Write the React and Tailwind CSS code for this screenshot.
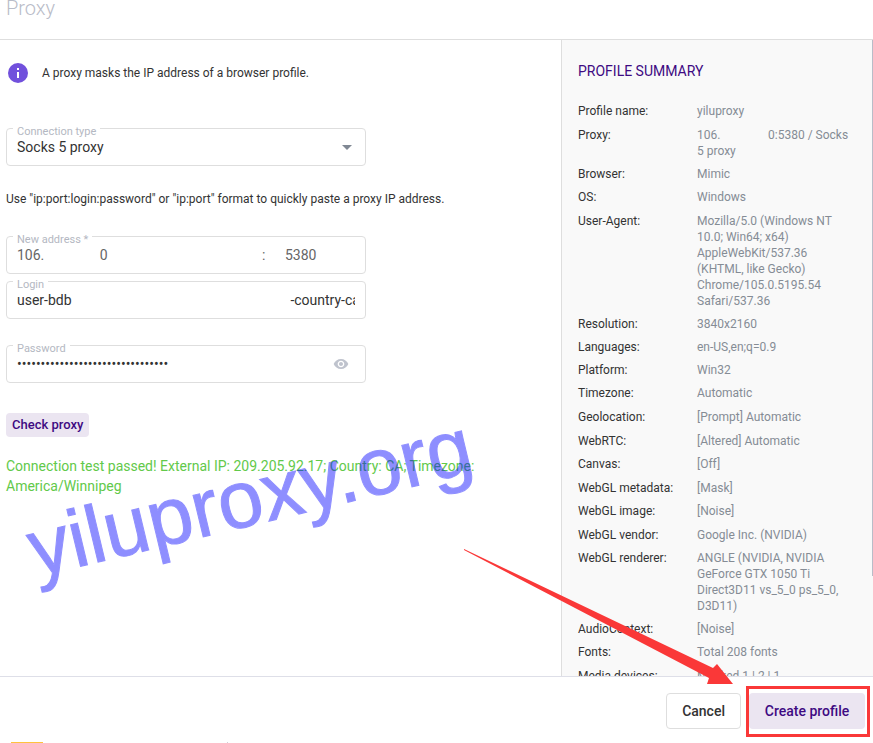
import React from "react";

// each inner list is one block of the summary
const summary = [
  [["Profile name:", "yiluproxy"]],
  [
    ["Proxy:", "106." + "\u00a0".repeat(16) + "0:5380 / Socks 5 proxy"],
    ["Browser:", "Mimic"],
    ["OS:", "Windows"],
  ],
  [
    [
      "User-Agent:",
      "Mozilla/5.0 (Windows NT 10.0; Win64; x64) AppleWebKit/537.36 (KHTML, like Gecko) Chrome/105.0.5195.54 Safari/537.36",
    ],
    ["Resolution:", "3840x2160"],
    ["Languages:", "en-US,en;q=0.9"],
    ["Platform:", "Win32"],
    ["Timezone:", "Automatic"],
  ],
  [["Geolocation:", "[Prompt] Automatic"]],
  [
    ["WebRTC:", "[Altered] Automatic"],
    ["Canvas:", "[Off]"],
  ],
  [
    ["WebGL metadata:", "[Mask]"],
    ["WebGL image:", "[Noise]"],
  ],
  [
    ["WebGL vendor:", "Google Inc. (NVIDIA)"],
    [
      "WebGL renderer:",
      "ANGLE (NVIDIA, NVIDIA GeForce GTX 1050 Ti Direct3D11 vs_5_0 ps_5_0, D3D11)",
    ],
    ["AudioContext:", "[Noise]"],
    ["Fonts:", "Total 208 fonts"],
  ],
  [["Media devices:", "Masked 1 | 2 | 1"]],
];

const Field = ({ id, label, children }) => (
  <fieldset className="w-[360px] max-w-full min-w-0 rounded border border-[#dedede] px-[10px] pb-[5px]">
    <legend className="-ml-1 h-3 px-1 text-[11px] leading-5 text-[#b4b8c2]">
      <label htmlFor={id} className="block">
        {label}
      </label>
    </legend>
    <div className="flex h-[26px] items-center text-sm">{children}</div>
  </fieldset>
);

const ProxyForm = () => (
  <main className="min-w-0 flex-1 pl-[6px] pt-[23px]">
    <div className="flex items-center gap-[14px] pl-[2px] text-xs leading-5">
      <svg className="h-5 w-5 shrink-0" viewBox="0 0 20 20">
        <circle cx="10" cy="10" r="10" fill="#7150dc" />
        <rect x="9" y="5" width="2" height="2" fill="#fff" />
        <rect x="9" y="9" width="2" height="6" fill="#fff" />
      </svg>
      <p>A proxy masks the IP address of a browser profile.</p>
    </div>

    <div className="mt-[39px]">
      <Field id="type" label="Connection type">
        <div className="relative flex-1">
          <select
            id="type"
            className="w-full appearance-none bg-transparent outline-none"
          >
            <option>Socks 5 proxy</option>
          </select>
          <svg
            className="pointer-events-none absolute right-[3px] top-2 h-[5px] w-[10px]"
            viewBox="0 0 10 5"
          >
            <path d="M0 0h10L5 5z" fill="#808893" />
          </svg>
        </div>
      </Field>
    </div>

    <p className="mt-[23px] text-xs leading-5">
      Use "ip:port:login:password" or "ip:port" format to quickly paste a proxy
      IP address.
    </p>

    <div className="mt-[21px] flex flex-col gap-px">
      <Field id="address" label="New address *">
        <input
          id="address"
          className="w-[245px] min-w-0 text-[#666] outline-none"
          defaultValue={"106." + " ".repeat(16) + "0"}
        />
        <span className="w-[23px] text-[#666]">:</span>
        <input
          aria-label="Port"
          className="min-w-0 flex-1 text-[#666] outline-none"
          defaultValue="5380"
        />
      </Field>
      <Field id="login" label="Login">
        <input
          id="login"
          className="w-full outline-none"
          defaultValue={"user-bdb" + " ".repeat(63) + "-country-ca"}
        />
      </Field>
    </div>

    <div className="mt-5">
      <Field id="password" label="Password">
        <input
          id="password"
          type="password"
          className="min-w-0 flex-1 text-sm outline-none"
          defaultValue="abcdefghijklmnopqrstuvwxyz012345"
        />
        <button aria-label="Show password" className="mr-[6px]">
          <svg className="h-4 w-4" viewBox="0 0 24 24" fill="#bfc3cd">
            <path d="M12 4.5C7 4.5 2.73 7.61 1 12c1.73 4.39 6 7.5 11 7.5s9.27-3.11 11-7.5c-1.73-4.39-6-7.5-11-7.5zM12 17c-2.76 0-5-2.24-5-5s2.24-5 5-5 5 2.24 5 5-2.24 5-5 5zm0-8c-1.66 0-3 1.34-3 3s1.34 3 3 3 3-1.34 3-3-1.34-3-3-3z" />
          </svg>
        </button>
      </Field>
    </div>

    <button className="mt-[30px] block h-6 rounded bg-[#ebe5f1] px-[6px] text-[13px] font-medium leading-6 text-[#3e0a82]">
      Check proxy
    </button>

    <p className="mt-[19px] text-sm leading-5 text-[#62c94a]">
      Connection test passed! External IP: 209.205.92.17; Country: CA; Timezone:
      America/Winnipeg
    </p>
  </main>
);

const Summary = () => (
  <aside className="flex w-[312px] shrink-0 border-l border-[#dedede] bg-[#f9f9f9]">
    <div className="min-w-0 flex-1 px-4 pt-[21px]">
      <h2 className="text-sm leading-5 text-[#3e0a82]">PROFILE SUMMARY</h2>
      <div className="mt-[22px] flex flex-col gap-2 text-xs leading-4">
        {summary.map((rows) => (
          <dl
            key={rows[0][0]}
            className="grid grid-cols-[119px_minmax(0,1fr)] gap-y-[7px]"
          >
            {rows.map(([name, value]) => (
              <React.Fragment key={name}>
                <dt>{name}</dt>
                <dd className="text-[#858c95]">{value}</dd>
              </React.Fragment>
            ))}
          </dl>
        ))}
      </div>
    </div>
    {/* scroll thumb */}
    <div className="h-[536px] w-px bg-[#b9bcc8]" />
  </aside>
);

const App = () => {
  return (
    <div className="relative flex h-screen flex-col overflow-hidden bg-white font-['Roboto',sans-serif] text-[#333]">
      <header className="h-10 shrink-0 border-b border-[#dedede] pl-[6px]">
        <h1 className="text-xl font-light leading-4 text-[#b9bcc8]">Proxy</h1>
      </header>

      <div className="flex min-h-0 flex-1 overflow-hidden">
        <ProxyForm />
        <Summary />
      </div>

      <footer className="flex shrink-0 flex-col border-t border-[#dedfe8] bg-white pt-[9px]">
        <div className="flex items-start justify-end gap-[5px] pr-[3px]">
          <button className="mt-[7px] h-9 rounded border border-[#dedede] px-[15px] text-sm font-medium">
            Cancel
          </button>
          <div className="border-3 border-[#fa3838] pb-[5px] pr-[2px] pt-1">
            <button className="block h-9 w-[116px] rounded bg-[#ebe5f1] text-sm font-medium text-[#3e0a82]">
              Create profile
            </button>
          </div>
        </div>
        <div className="mt-[5px] flex gap-[184px] pl-[11px]">
          <span className="h-px w-8 bg-[#ffc23d]" />
          <span className="h-px w-px bg-[#d0d0d8]" />
        </div>
      </footer>

      <div className="pointer-events-none absolute left-[20px] top-[511px] origin-top-left -rotate-[13.5deg] font-['Liberation_Sans',Arial,sans-serif] text-[81px] leading-none text-[#0000ff] opacity-44 [-webkit-text-stroke:1px_#0000ff]">
        yiluproxy.org
      </div>

      <svg
        className="pointer-events-none absolute bottom-[58px] right-[139px] h-[136px] w-[270px]"
        viewBox="0 0 270 136"
      >
        <path
          d="M0 0L249 119L253 115L269 135H243L245 129L0 1z"
          fill="#fa3838"
        />
      </svg>
    </div>
  );
};

export default App;
